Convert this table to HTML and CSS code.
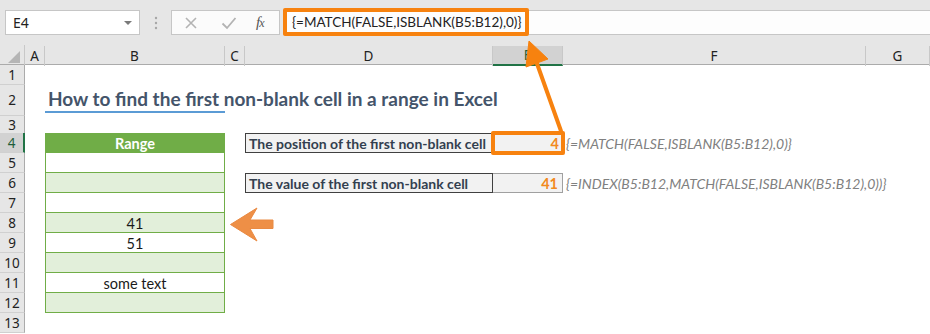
FILE: index.html
```html
<!DOCTYPE html>
<html>
<head>
<meta charset="utf-8">
<link rel="stylesheet" href="styles.css">
</head>
<body>
<div class="app">
  <div class="toolbar">
    <div class="namebox">
      <span class="nb-text">E4</span>
      <svg class="caret" width="10" height="6" viewBox="0 0 10 6"><path d="M1 1 L9 1 L5 5 Z" fill="#7a7a7a"/></svg>
    </div>
    <div class="grip">
      <svg width="4" height="14" viewBox="0 0 4 14"><circle cx="2" cy="2" r="1.2" fill="#a6a6a6"/><circle cx="2" cy="7" r="1.2" fill="#a6a6a6"/><circle cx="2" cy="12" r="1.2" fill="#a6a6a6"/></svg>
    </div>
    <div class="fxbtns">
      <svg class="ic-x" width="14" height="14" viewBox="0 0 14 14"><path d="M2 2 L12 12 M12 2 L2 12" stroke="#b3b3b3" stroke-width="1.6" fill="none"/></svg>
      <svg class="ic-ok" width="16" height="14" viewBox="0 0 16 14"><path d="M1.5 7.5 L6 12 L14.5 2" stroke="#b3b3b3" stroke-width="1.8" fill="none"/></svg>
      <span class="fx">f<span class="fx-x">x</span></span>
    </div>
    <div class="fbar">
      <div class="fhl">{=MATCH(FALSE,ISBLANK(B5:B12),0)}</div>
    </div>
  </div>

  <div class="sheet">
    <div class="row hdr">
      <div class="corner"><svg width="14" height="14" viewBox="0 0 14 14"><path d="M13 1 L13 13 L1 13 Z" fill="#b5b5b5"/></svg></div>
      <div class="ch">A</div>
      <div class="ch">B</div>
      <div class="ch">C</div>
      <div class="ch">D</div>
      <div class="ch sel">E</div>
      <div class="ch">F</div>
      <div class="ch">G</div>
    </div>

    <div class="row h20">
      <div class="rh">1</div><div></div><div></div><div></div><div></div><div></div><div></div><div></div>
    </div>
    <div class="row h31">
      <div class="rh">2</div><div></div>
      <div class="title-cell"><span class="title">How to find the first non-blank cell in a range in Excel</span></div>
      <div></div><div></div><div></div><div></div><div></div>
    </div>
    <div class="row h17">
      <div class="rh">3</div><div></div><div></div><div></div><div></div><div></div><div></div><div></div>
    </div>
    <div class="row h20">
      <div class="rh rsel">4</div><div></div>
      <div class="rg rg-head">Range</div>
      <div></div>
      <div class="lbl">The position of the first non-blank cell</div>
      <div class="val val-hl">4</div>
      <div class="fml">{=MATCH(FALSE,ISBLANK(B5:B12),0)}</div>
      <div></div>
    </div>
    <div class="row h20">
      <div class="rh">5</div><div></div><div class="rg"></div><div></div><div></div><div></div><div></div><div></div>
    </div>
    <div class="row h20">
      <div class="rh">6</div><div></div><div class="rg alt"></div><div></div>
      <div class="lbl">The value of the first non-blank cell</div>
      <div class="val val-box">41</div>
      <div class="fml">{=INDEX(B5:B12,MATCH(FALSE,ISBLANK(B5:B12),0))}</div>
      <div></div>
    </div>
    <div class="row h20">
      <div class="rh">7</div><div></div><div class="rg"></div><div></div><div></div><div></div><div></div><div></div>
    </div>
    <div class="row h20">
      <div class="rh">8</div><div></div><div class="rg alt">41</div><div></div><div></div><div></div><div></div><div></div>
    </div>
    <div class="row h20">
      <div class="rh">9</div><div></div><div class="rg">51</div><div></div><div></div><div></div><div></div><div></div>
    </div>
    <div class="row h20">
      <div class="rh">10</div><div></div><div class="rg alt"></div><div></div><div></div><div></div><div></div><div></div>
    </div>
    <div class="row h20">
      <div class="rh">11</div><div></div><div class="rg">some text</div><div></div><div></div><div></div><div></div><div></div>
    </div>
    <div class="row h20">
      <div class="rh">12</div><div></div><div class="rg alt"></div><div></div><div></div><div></div><div></div><div></div>
    </div>
    <div class="row h20">
      <div class="rh">13</div><div></div><div></div><div></div><div></div><div></div><div></div><div></div>
    </div>
  </div>

  <svg class="arrows" width="930" height="334" viewBox="0 0 930 334">
    <line x1="561" y1="131" x2="535" y2="58" stroke="#f7820f" stroke-width="4" stroke-linecap="round"/>
    <polygon points="529,41 548,59 526,67" fill="#f7820f" stroke="#f7820f" stroke-width="1" stroke-linejoin="round"/>
    <polygon points="230.5,224.5 257,208 250,220 273,220 273,228.5 250,228.5 257,241" fill="#ee8f46" stroke="#e98a43" stroke-width="1" stroke-linejoin="round"/>
  </svg>
</div>
</body>
</html>
```

FILE: styles.css
```css
* { box-sizing: border-box; }
html, body { margin: 0; padding: 0; background: #ffffff; }
body { font-family: "Noto Sans", "Open Sans", sans-serif; color: #222; }

.app { position: relative; width: 930px; height: 334px; overflow: hidden; background: #ffffff; }

.toolbar {
  height: 45px;
  background: #e6e6e6;
  display: flex;
  align-items: flex-start;
  padding: 10px 0 0 5px;
}
.namebox {
  width: 135px;
  height: 25px;
  background: #ffffff;
  border: 1px solid #c6c6c6;
  display: flex;
  align-items: center;
  justify-content: space-between;
  padding: 0 6px 0 7px;
  font-size: 14px;
  color: #222;
}
.caret { margin-top: 1px; }
.grip {
  width: 31px;
  height: 25px;
  display: flex;
  align-items: center;
  justify-content: center;
}
.fxbtns {
  width: 109px;
  height: 25px;
  background: #fbfbfb;
  border: 1px solid #c6c6c6;
  display: flex;
  align-items: center;
  padding-left: 12px;
}
.ic-x { margin-right: 23px; }
.ic-ok { margin-right: 19px; }
.fx {
  font-family: "Liberation Serif", serif;
  font-style: italic;
  font-size: 15px;
  color: #555;
  letter-spacing: -1px;
}
.fx-x { font-size: 12px; }
.fbar {
  flex: 1;
  height: 25px;
  margin-left: 3px;
  background: #fdfdfd;
  border-top: 1px solid #c6c6c6;
  border-bottom: 1px solid #c6c6c6;
  display: flex;
  align-items: stretch;
}
.fhl {
  width: 246px;
  margin: -3px 0 -2px 0;
  border: 4px solid #f7820f;
  border-radius: 2px;
  display: flex;
  align-items: center;
  padding: 0 0 1px 5px;
  font-family: Lato, "Open Sans", sans-serif;
  font-size: 13.5px;
  color: #222;
  white-space: nowrap;
}

.sheet { display: flex; flex-direction: column; }
.row {
  display: grid;
  grid-template-columns: 25px 20px 180px 20px 248px 70px 303px 64px;
}
.hdr { height: 20px; background: #e6e6e6; border-bottom: 1px solid #ababab; }
.h20 { height: 20px; }
.h31 { height: 31px; }
.h17 { height: 17px; }

.corner {
  display: flex;
  align-items: flex-end;
  justify-content: flex-end;
  padding: 0 3px 2px 0;
  border-right: 1px solid #c8c8c8;
}
.ch {
  display: flex;
  align-items: center;
  justify-content: center;
  font-size: 13.5px;
  color: #222;
  border-right: 1px solid #c8c8c8;
  margin-top: 1px;
}
.ch.sel {
  background: #d2d2d2;
  border-bottom: 2px solid #217346;
  color: #1e5e3a;
}

.rh {
  background: #e6e6e6;
  border-right: 1px solid #ababab;
  border-bottom: 1px solid #d0d0d0;
  display: flex;
  align-items: center;
  justify-content: center;
  font-size: 13.5px;
  color: #222;
}
.rh.rsel {
  background: #d2d2d2;
  border-right: 2px solid #217346;
  color: #1e5e3a;
}

.title-cell {
  position: relative;
  display: flex;
  align-items: flex-end;
  border-bottom: 2.5px solid #5b9bd5;
  margin-bottom: 3px;
  padding: 0 0 1px 3px;
  overflow: visible;
  white-space: nowrap;
}
.title {
  font-family: Lato, "Open Sans", sans-serif;
  font-weight: 700;
  font-size: 19px;
  color: #44546a;
}

.rg {
  border-left: 1px solid #70ad47;
  border-right: 1px solid #70ad47;
  border-bottom: 1px solid #70ad47;
  display: flex;
  align-items: center;
  justify-content: center;
  font-family: Lato, "Open Sans", sans-serif;
  font-size: 14.5px;
  color: #1a1a1a;
  padding-top: 1px;
}
.rg.alt { background: #e2efda; }
.rg-head {
  background: #70ad47;
  border-top: 1px solid #70ad47;
  color: #ffffff;
  font-weight: 700;
}

.lbl {
  background: #f2f2f2;
  border: 1px solid #404040;
  display: flex;
  align-items: center;
  padding: 1px 0 0 3px;
  font-family: Lato, "Open Sans", sans-serif;
  font-weight: 700;
  font-size: 14px;
  color: #333f4f;
  white-space: nowrap;
}
.val {
  background: #f2f2f2;
  display: flex;
  align-items: center;
  justify-content: flex-end;
  padding: 1px 4px 0 0;
  font-family: Lato, "Open Sans", sans-serif;
  font-weight: 700;
  font-size: 14.5px;
  color: #f28a1e;
}
.val-hl { position: relative; }
.val-hl::after {
  content: "";
  position: absolute;
  left: -2px; right: -2px; top: -2px; bottom: -2px;
  border: 4px solid #f7820f;
  border-radius: 2px;
}
.val-box {
  border-top: 1px solid #a0a0a0;
  border-bottom: 1px solid #a0a0a0;
  border-right: 1px solid #a0a0a0;
}
.fml {
  display: flex;
  align-items: center;
  padding: 1px 0 0 3px;
  font-family: Lato, "Open Sans", sans-serif;
  font-style: italic;
  font-size: 14px;
  color: #808080;
  white-space: nowrap;
  overflow: visible;
}

.arrows { position: absolute; left: 0; top: 0; pointer-events: none; }
```
